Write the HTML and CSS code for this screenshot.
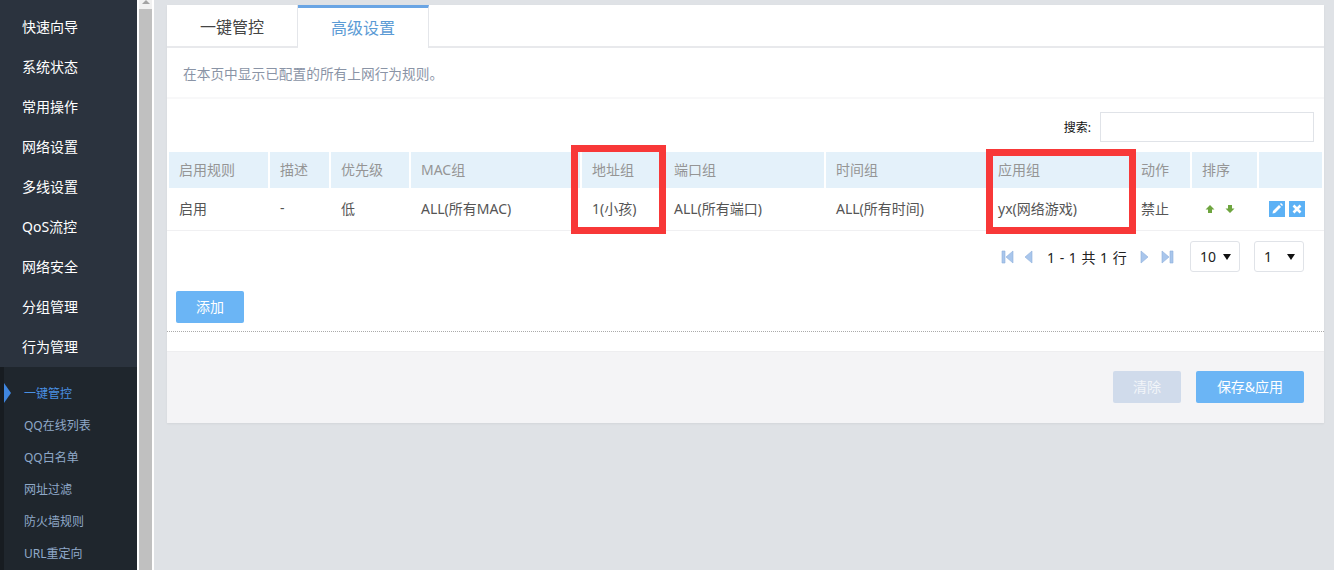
FILE: index.html
```html
<!DOCTYPE html>
<html lang="zh-CN">
<head>
<meta charset="utf-8">
<title>高级设置</title>
<link rel="stylesheet" href="styles.css">
</head>
<body>
<aside class="sidebar">
  <nav class="menu">
    <a>快速向导</a><a>系统状态</a><a>常用操作</a><a>网络设置</a><a>多线设置</a><a>QoS流控</a><a>网络安全</a><a>分组管理</a><a>行为管理</a>
  </nav>
  <nav class="submenu">
    <a class="active">一键管控</a><a>QQ在线列表</a><a>QQ白名单</a><a>网址过滤</a><a>防火墙规则</a><a>URL重定向</a>
  </nav>
</aside>
<div class="scrollbar"><div class="scroll-up"></div><div class="scroll-thumb"></div></div>
<main class="main">
  <section class="panel">
    <div class="tabs">
      <div class="tab">一键管控</div>
      <div class="tab tab-active">高级设置</div>
    </div>
    <p class="desc">在本页中显示已配置的所有上网行为规则。</p>
    <div class="search"><label>搜索:</label><input class="search-input" type="text"></div>
    <table class="grid">
      <colgroup>
        <col class="c1"><col class="c2"><col class="c3"><col class="c4"><col class="c5"><col class="c6"><col class="c7"><col class="c8"><col class="c9"><col class="c10"><col class="c11">
      </colgroup>
      <thead>
        <tr><th>启用规则</th><th>描述</th><th>优先级</th><th>MAC组</th><th>地址组</th><th>端口组</th><th>时间组</th><th>应用组</th><th>动作</th><th>排序</th><th></th></tr>
      </thead>
      <tbody>
        <tr>
          <td>启用</td><td>-</td><td>低</td><td>ALL(所有MAC)</td><td>1(小孩)</td><td>ALL(所有端口)</td><td>ALL(所有时间)</td><td>yx(网络游戏)</td><td>禁止</td>
          <td class="sort">
            <svg width="10" height="10" viewBox="0 0 10 10"><path d="M5 1 9.5 5.5H7V9H3V5.5H.5Z" fill="#6ea53f"/></svg>
            <svg width="10" height="10" viewBox="0 0 10 10"><path d="M5 9 9.5 4.5H7V1H3V4.5H.5Z" fill="#6ea53f"/></svg>
          </td>
          <td class="ops">
            <span class="op"><svg width="16" height="16" viewBox="0 0 16 16"><path d="M4 10 10 4 12 6 6 12 3.5 12.5Z" fill="#fff"/><path d="M11 3 12 2 14 4 13 5Z" fill="#fff"/></svg></span>
            <span class="op"><svg width="16" height="16" viewBox="0 0 16 16"><path d="M4.5 4.5 11.5 11.5M11.5 4.5 4.5 11.5" stroke="#fff" stroke-width="2.6"/></svg></span>
          </td>
        </tr>
      </tbody>
    </table>
    <div class="pager">
      <svg class="pg pg-first" width="13" height="14" viewBox="0 0 13 14"><path d="M1 1H4V13H1Z M12 1V13L5 7Z" fill="#a9c6ec" stroke="#8eb0dc" stroke-width=".6"/></svg>
      <svg class="pg pg-prev" width="9" height="14" viewBox="0 0 9 14"><path d="M8 1V13L1 7Z" fill="#a9c6ec" stroke="#8eb0dc" stroke-width=".6"/></svg>
      <span class="pg-text">1 - 1 共 1 行</span>
      <svg class="pg pg-next" width="9" height="14" viewBox="0 0 9 14"><path d="M1 1V13L8 7Z" fill="#a9c6ec" stroke="#8eb0dc" stroke-width=".6"/></svg>
      <svg class="pg pg-last" width="13" height="14" viewBox="0 0 13 14"><path d="M12 1H9V13H12Z M1 1V13L8 7Z" fill="#a9c6ec" stroke="#8eb0dc" stroke-width=".6"/></svg>
      <div class="select sel-size"><span>10</span><i></i></div>
      <div class="select sel-page"><span>1</span><i></i></div>
    </div>
    <div class="add-row"><button class="btn">添加</button></div>
    <div class="foot">
      <button class="btn btn-muted">清除</button>
      <button class="btn btn-save">保存&amp;应用</button>
    </div>
    <div class="mark mark-a"></div>
    <div class="mark mark-b"></div>
  </section>
</main>
</body>
</html>
```
FILE: styles.css
```css
* { box-sizing: border-box; }
html, body { margin: 0; height: 570px; overflow: hidden; }
body {
  display: flex;
  background: #dfe2e6;
  font-family: "Noto Sans", "Noto Sans CJK SC", "Liberation Sans", sans-serif;
  font-size: 14px;
  color: #555;
}
.sidebar { width: 137px; flex: none; background: #2b333e; display: flex; flex-direction: column; }
.menu { padding-top: 7px; height: 367px; flex: none; }
.menu a { display: block; height: 40px; line-height: 40px; padding-left: 22px; color: #fff; font-size: 14px; }
.submenu { flex: 1; background: #1f262d; border-left: 4px solid #171c21; padding-top: 10px; }
.submenu a { display: block; position: relative; height: 32px; line-height: 34px; padding-left: 20px; color: #8fa9c9; font-size: 12px; }
.submenu a.active { color: #4a90e2; }
.submenu a.active::before {
  content: ""; position: absolute; left: 0; top: 6px;
  border-left: 7px solid #3f86e0; border-top: 10px solid transparent; border-bottom: 10px solid transparent;
}
.scrollbar { width: 17px; flex: none; background: #fff; padding: 0 2px; }
.scroll-up { height: 9px; background: #f1f1f1; position: relative; }
.scroll-up::after {
  content: ""; position: absolute; left: 3px; top: 0;
  border-left: 4px solid transparent; border-right: 4px solid transparent; border-bottom: 4px solid #a3a3a3;
}
.scroll-thumb { height: 561px; background: #c0c0c0; }
.main { flex: 1; padding: 5px 10px 0 13px; min-width: 0; }
.panel { position: relative; height: 418px; background: #fff; box-shadow: 0 1px 2px rgba(0,0,0,.06); }
.tabs { display: flex; height: 43px; border-bottom: 2px solid #e8e9ec; }
.tab { width: 131px; height: 42px; line-height: 45px; text-align: center; font-size: 16px; color: #444; border-right: 1px solid #e4e6ea; }
.tab-active { width: 131px; line-height: 41px; height: 43px; color: #5b9bd5; border-top: 3px solid #6aa5e4; background: #fff; }
.desc { margin: 0; height: 51px; padding-left: 16px; line-height: 52px; font-size: 13.7px; color: #8a94a6; border-bottom: 2px solid #f8f8f9; }
.search { display: flex; justify-content: flex-end; align-items: center; height: 30px; margin-top: 13px; padding-right: 10px; }
.search label { font-size: 12px; color: #111; margin-right: 9px; }
.search-input { width: 214px; height: 30px; border: 1px solid #e0e3e8; background: #fff; padding: 0; }
.grid { width: 1157px; table-layout: fixed; border-collapse: separate; border-spacing: 0; margin-top: 10px; }
.c1 { width: 103px; } .c2 { width: 61px; } .c3 { width: 80px; } .c4 { width: 171px; } .c5 { width: 82px; } .c6 { width: 162px; }
.c7 { width: 162px; } .c8 { width: 143px; } .c9 { width: 61px; } .c10 { width: 67px; } .c11 { width: 65px; }
.grid th { height: 36px; padding: 0 0 2px 10px; text-align: left; font-weight: 400; background: #e4f1fa; background-clip: padding-box; color: #959595; border-right: 2px solid #fff; }
.grid th:first-child { border-left: 2px solid #fff; }
.grid td { height: 43px; padding: 0 0 3px 10px; border-bottom: 1px solid #f0f0f2; white-space: nowrap; color: #555; font-size: 14px; }
.grid td:first-child { padding-left: 12px; }
.grid .sort { padding: 0 0 1px 13px; font-size: 0; line-height: 0; }
.sort svg { margin-right: 10px; }
.grid .ops { padding: 0 0 0 10px; font-size: 0; line-height: 0; }
.op { display: inline-block; width: 16px; height: 16px; background: #5cb1f5; margin-right: 4px; }
.op svg { display: block; }
.pager { display: flex; align-items: center; height: 31px; margin-top: 10px; padding-left: 834px; color: #222; }
.pg { flex: none; }
.pg-prev { margin-left: 10px; }
.pg-text { margin-left: 14px; width: 79px; white-space: nowrap; font-size: 14px; color: #222; word-spacing: 1px; }
.pg-next { margin-left: 14px; }
.pg-last { margin-left: 12px; }
.select { position: relative; height: 31px; line-height: 29px; border: 1px solid #e0e3e8; border-radius: 3px; padding-left: 9px; color: #222; background: #fff; }
.select i { position: absolute; right: 8px; top: 12px; border-left: 4px solid transparent; border-right: 4px solid transparent; border-top: 6px solid #111; }
.sel-size { width: 50px; margin-left: 16px; }
.sel-page { width: 50px; margin-left: 14px; }
.btn { display: block; height: 32px; width: 68px; border: 0; border-radius: 2px; padding: 0 0 2px; background: #6bb5f5; color: #fff; font: 14px "Noto Sans", "Noto Sans CJK SC", "Liberation Sans", sans-serif; }
.add-row { height: 60px; padding: 19px 0 0 9px; border-bottom: 1px dotted #aaa; }
.foot { position: absolute; left: 0; right: 0; bottom: 0; height: 72px; background: #f4f4f6; border-top: 1px solid #eeeef0; display: flex; justify-content: flex-end; padding: 19px 20px 0 0; gap: 15px; }
.btn-muted { background: #d0dbeb; color: #f2f5f9; }
.btn-save { width: 108px; }
.mark { position: absolute; border: 7px solid #f83838; pointer-events: none; }
.mark-a { left: 404px; top: 140px; width: 95px; height: 89px; }
.mark-b { left: 819px; top: 144px; width: 150px; height: 85px; }
```
